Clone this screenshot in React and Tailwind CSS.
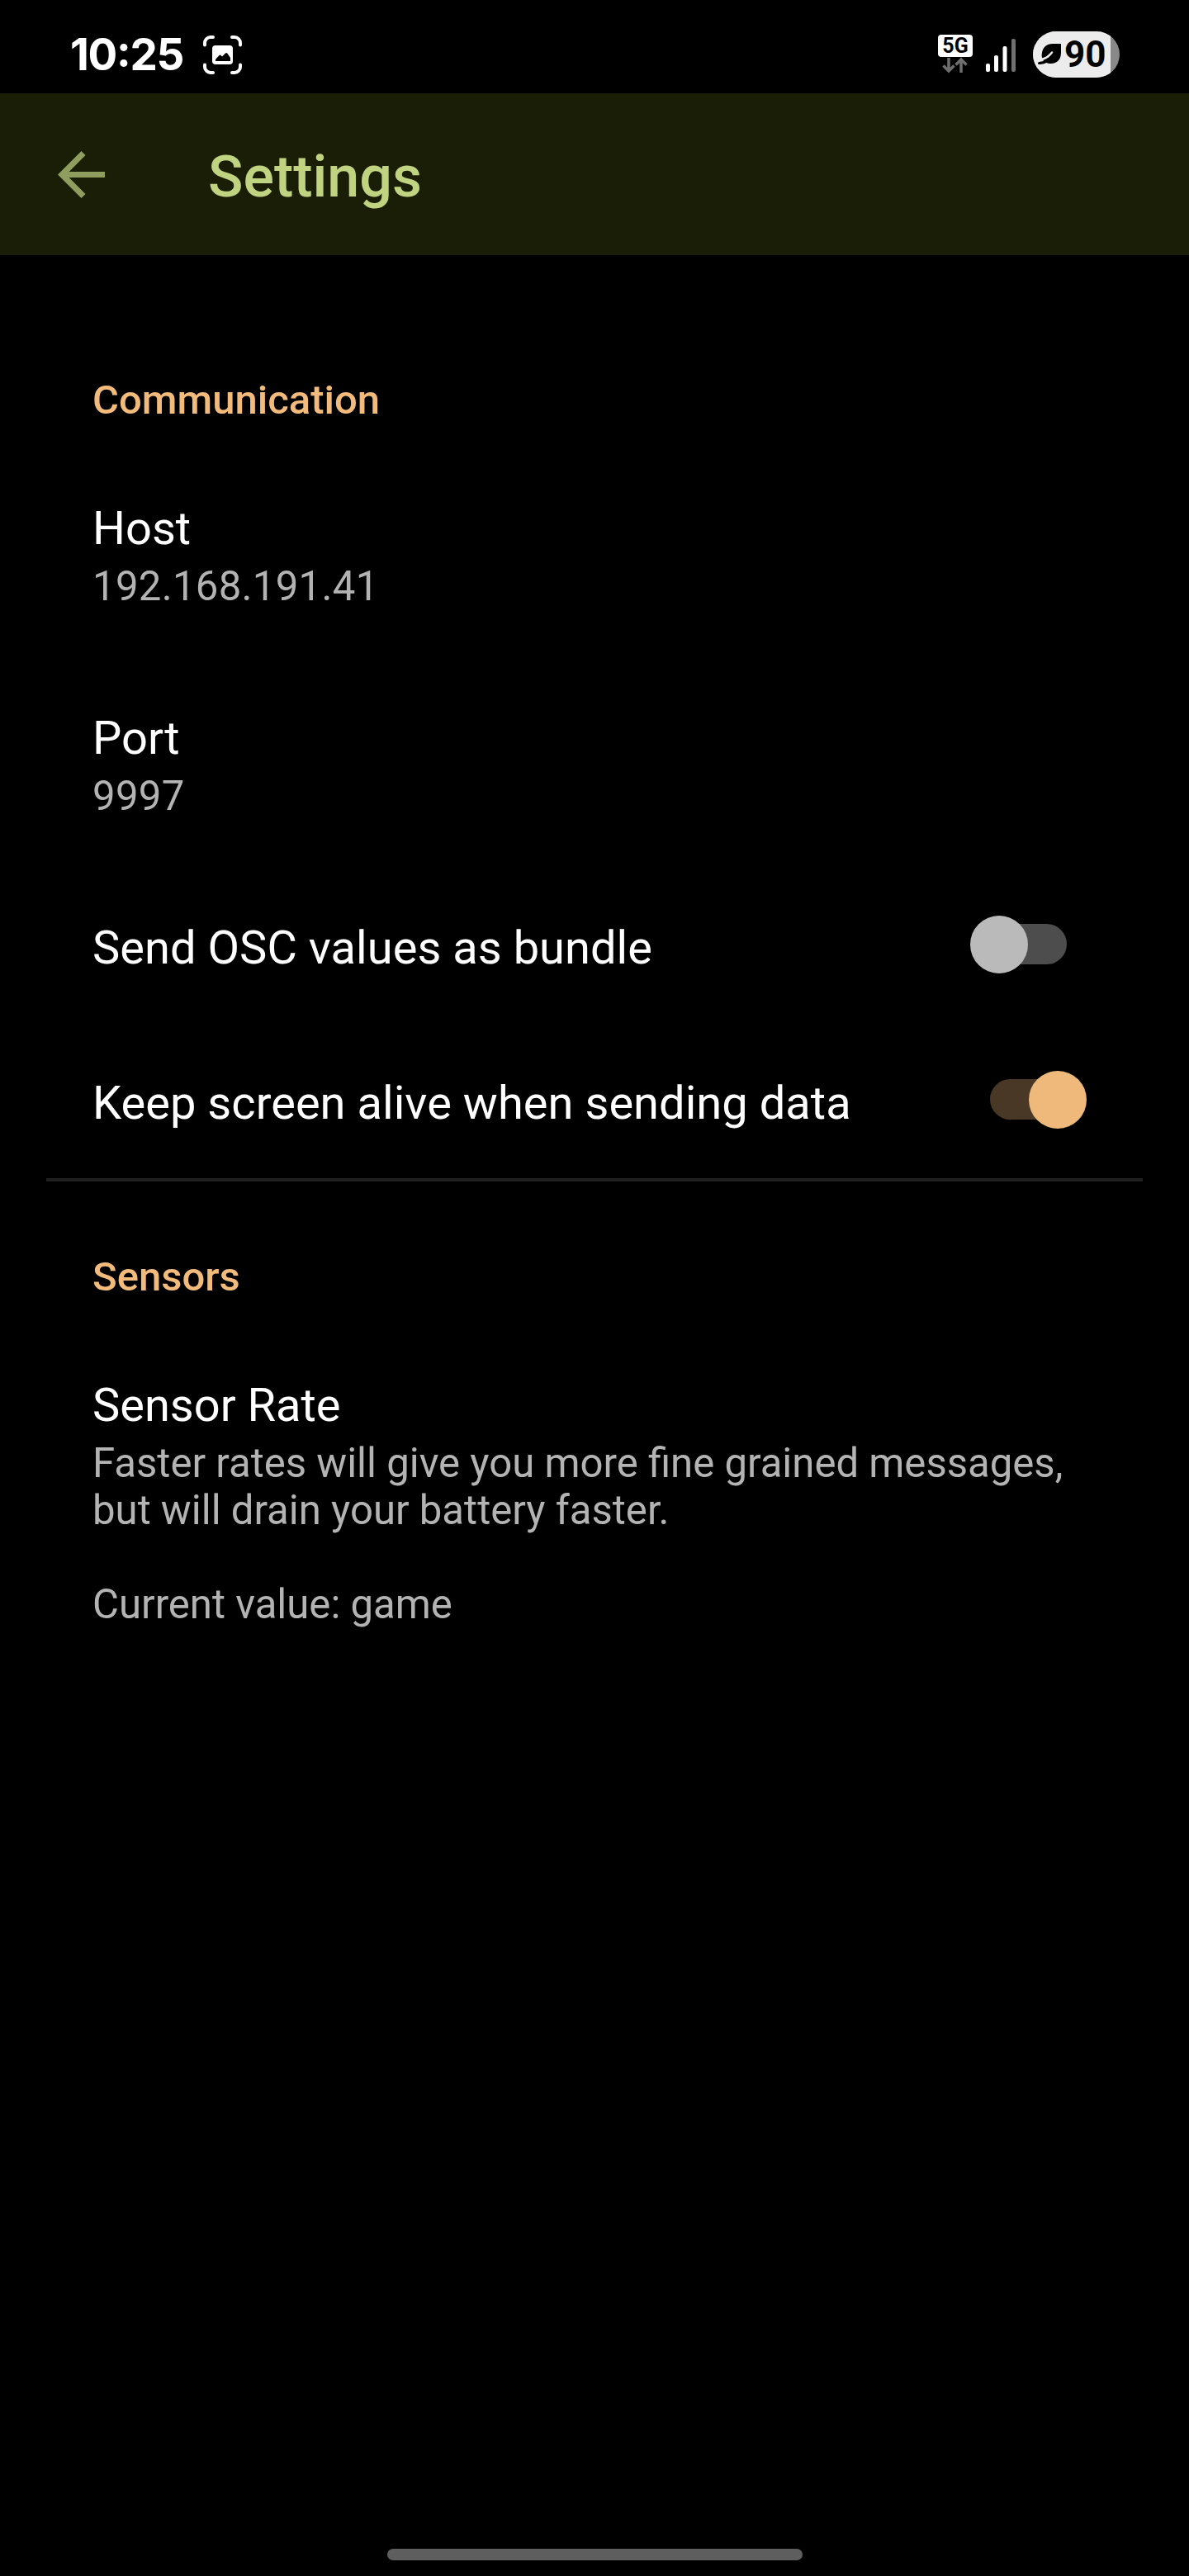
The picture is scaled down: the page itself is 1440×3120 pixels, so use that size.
function Capture() {
  return (
    <svg className="ml-[25px] h-[47px] w-[47px]" viewBox="0 0 47 47" fill="none">
      <g stroke="#fff" strokeWidth="4" strokeLinecap="round">
        <path d="M2 11.500V9a7 7 0 0 1 7-7h3M35 2h3a7 7 0 0 1 7 7v2.500M45 35.500v2.500a7 7 0 0 1-7 7h-3M12 45H9a7 7 0 0 1-7-7v-2.500" />
      </g>
      <rect x="11" y="12" width="25" height="23" rx="4" fill="#fff" />
      <path d="M15 31v-2l4.500-5q1-1 2 0l1.500 1.500 4-4q1.200-1 2.200 0l3.800 5.500v4z" fill="#000" />
    </svg>
  );
}

function StatusBar() {
  return (
    <div className="flex h-[113px] items-start justify-between pl-[85px] pr-[84px]">
      <div className="flex pt-[43px]">
        <div className="flex h-[47px] w-[136px] items-center whitespace-nowrap font-['Inter'] text-[53px] font-bold leading-[47px] tracking-[-1.3px] text-white">
          10<span className="-translate-y-[4px]">:</span>25
        </div>
        <Capture />
      </div>
      <div className="flex pt-[38px]">
        <div className="mt-[4px] w-[42px]">
          <div className="flex h-[27px] items-center justify-center rounded-[4px] bg-white text-[25px] font-bold leading-[27px] text-black">
            5G
          </div>
          <svg className="h-[20px] w-[42px]" viewBox="0 0 42 20" fill="none" stroke="#6e6e6e" strokeWidth="3.500">
            <path d="M13 1v16M6.500 10.500l6.500 6.500 6.500-6.500M28 19V3M21.500 9.500L28 3l6.500 6.500" />
          </svg>
        </div>
        <svg className="ml-[16px] mt-[9px] h-[40px] w-[36px]" viewBox="0 0 36 40">
          <rect x="0" y="30" width="5" height="10" rx="2" fill="#fff" />
          <rect x="10" y="20" width="5" height="20" rx="2" fill="#fff" />
          <rect x="20.500" y="9" width="5" height="31" rx="2" fill="#fff" />
          <rect x="31" y="0" width="5" height="40" rx="2" fill="#707070" />
        </svg>
        <div className="ml-[21px] flex h-[56px] w-[105px] items-center overflow-hidden rounded-full bg-[#888888]">
          <div className="flex h-full w-[94px] items-center bg-[#ececec] pl-[6px]">
            <svg className="h-[28px] w-[29px] shrink-0" viewBox="0 0 29 28">
              <path d="M28 1v11c0 8-5 13-12 13-4 0-7-1-9-3C5 19 4 16 5 12 6 5 11 1 18 1z" fill="#000" />
              <path d="M17 11.500C14 15.500 9 19 4 20" stroke="#ececec" strokeWidth="2.500" fill="none" strokeLinecap="round" />
              <path d="M1.500 24.500c4 0 7-1 9.500-3" stroke="#000" strokeWidth="3" fill="none" strokeLinecap="round" />
            </svg>
            <span className="ml-[3px] text-[44px] font-bold leading-[56px] text-black">90</span>
          </div>
        </div>
      </div>
    </div>
  );
}

function AppBar() {
  return (
    <header className="flex h-[196px] items-start bg-[#1a1e06] pl-[70px]">
      <svg className="mt-[70px] h-[57px] w-[57px]" viewBox="4 4 16 16" fill="#8f9e5f">
        <path d="M20 11H7.830l5.590-5.590L12 4l-8 8 8 8 1.410-1.410L7.830 13H20z" />
      </svg>
      <h1 className="ml-[125px] mt-[60px] text-[70px] font-medium leading-[82px] text-[#c0d380]">Settings</h1>
    </header>
  );
}

function Preference({ title, children }) {
  return (
    <div className="px-28 pb-[66px] pt-14">
      <div className="text-[56px] leading-[66px] text-white">{title}</div>
      <div className="mt-[9px] text-[49.1px] leading-[57px] text-[#b3b3b3]">{children}</div>
    </div>
  );
}

function Switch({ on }) {
  return (
    <div className="relative mt-[50.3px] flex h-[70px] w-[141px] items-center justify-center">
      <div className={on ? "mb-[2px] h-[49px] w-[93px] rounded-full bg-[#493825]" : "mb-[2px] h-[49px] w-[93px] rounded-full bg-[#4d4d4d]"} />
      <div
        className={
          on
            ? "absolute right-0 top-0 h-[70px] w-[70px] rounded-full bg-[#efb97c]"
            : "absolute left-0 top-0 h-[70px] w-[70px] rounded-full bg-[#bababa]"
        }
      />
    </div>
  );
}

function SwitchRow({ title, on }) {
  return (
    <div className={on ? "flex h-[180px] justify-between pl-28 pr-[124px]" : "flex h-[188px] justify-between pl-28 pr-[124px]"}>
      <div className="pt-14 text-[56px] leading-[66px] tracking-[0.04px] text-white">{title}</div>
      <Switch on={on} />
    </div>
  );
}

function Category({ className, children }) {
  return <h2 className={"px-28 text-[49px] font-medium leading-[57px] text-[#f2bb7c] " + className}>{children}</h2>;
}

export default function App() {
  return (
    <div className="flex h-[3120px] w-[1440px] flex-col overflow-hidden bg-black font-['Roboto',sans-serif]">
      <StatusBar />
      <AppBar />
      <main className="flex-1">
        <Category className="h-[242px] pt-[147px]">Communication</Category>
        <Preference title="Host">
          <span className="tracking-[0.3px]">192.168.191.41</span>
        </Preference>
        <Preference title="Port">
          <span className="tracking-[0.3px]">9997</span>
        </Preference>
        <SwitchRow title="Send OSC values as bundle" on={false} />
        <SwitchRow title="Keep screen alive when sending data" on />
        <div className="mx-14 h-[4px] bg-[#202020]" />
        <Category className="h-[182px] pt-[87px]">Sensors</Category>
        <Preference title="Sensor Rate">
          Faster rates will give you more fine grained messages,
          <br />
          but will drain your battery faster.
          <br />
          <br />
          Current value: game
        </Preference>
      </main>
      <div className="mx-auto mb-[19px] h-[14px] w-[503px] rounded-full bg-[#5e5e5e]" />
    </div>
  );
}
